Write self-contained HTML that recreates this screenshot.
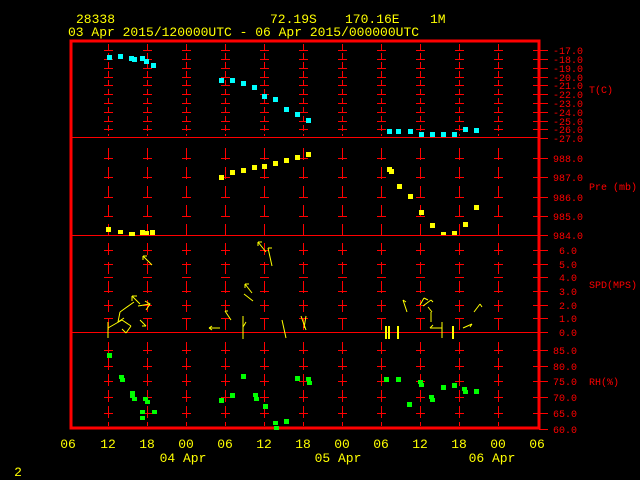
<!DOCTYPE html>
<html><head><meta charset="utf-8"><style>
html,body{margin:0;padding:0;background:#000;width:640px;height:480px;overflow:hidden}
svg{display:block}
text{font-family:"Liberation Mono",monospace}
</style></head><body>
<svg width="640" height="480" viewBox="0 0 640 480" xmlns="http://www.w3.org/2000/svg" shape-rendering="crispEdges">
<rect width="640" height="480" fill="#000"/>
<g fill="#ffff00" font-size="13">
<text x="76" y="23">28338</text>
<text x="270" y="23">72.19S</text>
<text x="345" y="23">170.16E</text>
<text x="430" y="23">1M</text>
<text x="68" y="36">03 Apr 2015/120000UTC - 06 Apr 2015/000000UTC</text>
</g>
<g stroke="#ff0000" stroke-width="1">
<path d="M108.5 44V136M147.5 44V136M186.5 44V136M225.5 44V136M264.5 44V136M303.5 44V136M342.5 44V136M381.5 44V136M420.5 44V136M459.5 44V136M498.5 44V136" stroke-dasharray="6 3"/>
<path d="M108.5 148V330M147.5 148V330M186.5 148V330M225.5 148V330M264.5 148V330M303.5 148V330M342.5 148V330M381.5 148V330M420.5 148V330M459.5 148V330M498.5 148V330" stroke-dasharray="12 7"/>
<path d="M108.5 342V426M147.5 342V426M186.5 342V426M225.5 342V426M264.5 342V426M303.5 342V426M342.5 342V426M381.5 342V426M420.5 342V426M459.5 342V426M498.5 342V426" stroke-dasharray="12 4"/>
<g stroke-dasharray="9 30">
<path d="M104 50.5H543M104 59.5H543M104 68.5H543M104 77.5H543M104 85.5H543M104 94.5H543M104 103.5H543M104 112.5H543M104 121.5H543M104 129.5H543"/>
<path d="M104 158.5H543M104 177.5H543M104 197.5H543M104 216.5H543"/>
<path d="M104 250.5H543M104 264.5H543M104 277.5H543M104 291.5H543M104 305.5H543M104 318.5H543"/>
<path d="M104 350.5H543M104 366.5H543M104 381.5H543M104 397.5H543M104 413.5H543"/>
</g>
<path d="M539 50.5H548M539 59.5H548M539 68.5H548M539 77.5H548M539 85.5H548M539 94.5H548M539 103.5H548M539 112.5H548M539 121.5H548M539 129.5H548M539 138.5H548M539 158.5H548M539 177.5H548M539 197.5H548M539 216.5H548M539 235.5H548M539 250.5H548M539 264.5H548M539 277.5H548M539 291.5H548M539 305.5H548M539 318.5H548M539 332.5H548M539 350.5H548M539 366.5H548M539 381.5H548M539 397.5H548M539 413.5H548M539 429.5H548"/>
</g>
<g fill="#ff0000">
<rect x="70" y="137" width="470" height="1"/>
<rect x="70" y="235" width="470" height="1"/>
<rect x="70" y="332" width="470" height="1"/>
</g>
<rect x="71" y="41" width="468" height="387" fill="none" stroke="#ff0000" stroke-width="3"/>
<g fill="#ff0000" font-size="10">
<text x="553" y="54">-17.0</text><text x="553" y="63">-18.0</text><text x="553" y="72">-19.0</text><text x="553" y="81">-20.0</text><text x="553" y="89">-21.0</text><text x="553" y="98">-22.0</text><text x="553" y="107">-23.0</text><text x="553" y="116">-24.0</text><text x="553" y="125">-25.0</text><text x="553" y="133">-26.0</text><text x="553" y="142">-27.0</text>
<text x="553" y="162">988.0</text><text x="553" y="181">987.0</text><text x="553" y="201">986.0</text><text x="553" y="220">985.0</text><text x="553" y="239">984.0</text>
<text x="559" y="254">6.0</text><text x="559" y="268">5.0</text><text x="559" y="281">4.0</text><text x="559" y="295">3.0</text><text x="559" y="309">2.0</text><text x="559" y="322">1.0</text><text x="559" y="336">0.0</text>
<text x="553" y="354">85.0</text><text x="553" y="370">80.0</text><text x="553" y="385">75.0</text><text x="553" y="401">70.0</text><text x="553" y="417">65.0</text><text x="553" y="433">60.0</text>
<text x="589" y="93">T(C)</text><text x="589" y="190">Pre (mb)</text><text x="589" y="288">SPD(MPS)</text><text x="589" y="385">RH(%)</text>
</g>
<g fill="#00ffff">
<rect x="107" y="55" width="5" height="5"/><rect x="118" y="54" width="5" height="5"/><rect x="129" y="56" width="5" height="5"/><rect x="132" y="57" width="5" height="5"/><rect x="140" y="56" width="5" height="5"/><rect x="144" y="59" width="5" height="5"/><rect x="151" y="63" width="5" height="5"/>
<rect x="219" y="78" width="5" height="5"/><rect x="230" y="78" width="5" height="5"/><rect x="241" y="81" width="5" height="5"/><rect x="252" y="85" width="5" height="5"/><rect x="262" y="94" width="5" height="5"/><rect x="273" y="97" width="5" height="5"/><rect x="284" y="107" width="5" height="5"/><rect x="295" y="112" width="5" height="5"/><rect x="306" y="118" width="5" height="5"/>
<rect x="387" y="129" width="5" height="5"/><rect x="396" y="129" width="5" height="5"/><rect x="408" y="129" width="5" height="5"/><rect x="419" y="132" width="5" height="5"/><rect x="430" y="132" width="5" height="5"/><rect x="441" y="132" width="5" height="5"/><rect x="452" y="132" width="5" height="5"/><rect x="463" y="127" width="5" height="5"/><rect x="474" y="128" width="5" height="5"/>
</g>
<g fill="#ffff00">
<rect x="106" y="227" width="5" height="5"/><rect x="118" y="230" width="5" height="4"/><rect x="129" y="232" width="6" height="4"/><rect x="140" y="230" width="5" height="5"/><rect x="144" y="231" width="5" height="4"/><rect x="150" y="230" width="5" height="5"/>
<rect x="219" y="175" width="5" height="5"/><rect x="230" y="170" width="5" height="5"/><rect x="241" y="168" width="5" height="5"/><rect x="252" y="165" width="5" height="5"/><rect x="262" y="164" width="5" height="5"/><rect x="273" y="161" width="5" height="5"/><rect x="284" y="158" width="5" height="5"/><rect x="295" y="155" width="5" height="5"/><rect x="306" y="152" width="5" height="5"/>
<rect x="387" y="167" width="5" height="5"/><rect x="389" y="169" width="5" height="5"/><rect x="397" y="184" width="5" height="5"/><rect x="408" y="194" width="5" height="5"/><rect x="419" y="210" width="5" height="5"/><rect x="430" y="223" width="5" height="5"/><rect x="441" y="232" width="5" height="3"/><rect x="452" y="231" width="5" height="4"/><rect x="463" y="222" width="5" height="5"/><rect x="474" y="205" width="5" height="5"/>
</g>
<g stroke="#ffff00" stroke-width="1" fill="none" shape-rendering="auto">
<path d="M143 256L152 265M143 256H147M143 256V260"/>
<path d="M108 322V338M108 328L122 320M122 320L131 326M131 326L126 333M126 333L122 329"/>
<path d="M132 296L140 304M132 296H137M132 296V301"/>
<path d="M134 302L120 312M120 312L118 322M118 322L124 318"/>
<path d="M138 306L150 304M145 301L150 304L146 310"/>
<path d="M140 320L146 326M146 326L142 326"/>
<path d="M258 242L266 252M258 242H262M258 242V246"/>
<path d="M268 248L272 266M268 248H272"/>
<path d="M245 284L252 293M245 284H249M245 284V288"/>
<path d="M244 294L253 301"/>
<path d="M225 311L231 320M225 311H228"/>
<path d="M209 328H220M209 328L212 326M209 328L212 330"/>
<path d="M243 316V339M243 327L246 322"/>
<path d="M282 320L286 338"/>
<path d="M301 316L306 330M306 316L304 328"/>
<path d="M386 326V339M389 326V339M398 326V339" stroke-width="2"/>
<path d="M403 300L407 312M403 300L406 302"/>
<path d="M420 305L424 298M424 298L428 300"/>
<path d="M423 306L431 300M431 300L433 302"/>
<path d="M431 312V322M428 307L432 312"/>
<path d="M430 328H442M430 328L433 325"/>
<path d="M442 322V338"/>
<path d="M453 326V339" stroke-width="2"/>
<path d="M463 328L472 324M472 324L470 327"/>
<path d="M474 312L480 304M480 304L482 307"/>
</g>
<g fill="#00ff00">
<rect x="107" y="353" width="5" height="5"/><rect x="119" y="375" width="5" height="4"/><rect x="120" y="378" width="5" height="4"/><rect x="130" y="391" width="5" height="4"/><rect x="130" y="394" width="5" height="4"/><rect x="132" y="397" width="5" height="4"/><rect x="143" y="397" width="5" height="4"/><rect x="145" y="400" width="5" height="4"/><rect x="140" y="410" width="5" height="4"/><rect x="152" y="410" width="5" height="4"/><rect x="140" y="416" width="5" height="4"/>
<rect x="241" y="374" width="5" height="5"/><rect x="230" y="393" width="5" height="5"/><rect x="219" y="398" width="5" height="5"/><rect x="253" y="393" width="5" height="4"/><rect x="254" y="397" width="5" height="4"/><rect x="263" y="404" width="5" height="5"/><rect x="284" y="419" width="5" height="5"/><rect x="273" y="421" width="5" height="4"/><rect x="274" y="426" width="5" height="4"/>
<rect x="295" y="376" width="5" height="5"/><rect x="306" y="377" width="5" height="4"/><rect x="307" y="381" width="5" height="4"/>
<rect x="384" y="377" width="5" height="5"/><rect x="396" y="377" width="5" height="5"/><rect x="407" y="402" width="5" height="5"/><rect x="418" y="380" width="5" height="4"/><rect x="419" y="383" width="5" height="4"/><rect x="429" y="395" width="5" height="4"/><rect x="430" y="398" width="5" height="4"/><rect x="441" y="385" width="5" height="5"/><rect x="452" y="383" width="5" height="5"/><rect x="462" y="387" width="5" height="4"/><rect x="463" y="390" width="5" height="4"/><rect x="474" y="389" width="5" height="5"/>
</g>
<g fill="#ffff00" font-size="13" text-anchor="middle">
<text x="68" y="448">06</text><text x="108" y="448">12</text><text x="147" y="448">18</text><text x="186" y="448">00</text><text x="225" y="448">06</text><text x="264" y="448">12</text><text x="303" y="448">18</text><text x="342" y="448">00</text><text x="381" y="448">06</text><text x="420" y="448">12</text><text x="459" y="448">18</text><text x="498" y="448">00</text><text x="537" y="448">06</text>
<text x="183" y="462">04 Apr</text><text x="338" y="462">05 Apr</text><text x="492" y="462">06 Apr</text>
<text x="18" y="476">2</text>
</g>
</svg>
</body></html>
